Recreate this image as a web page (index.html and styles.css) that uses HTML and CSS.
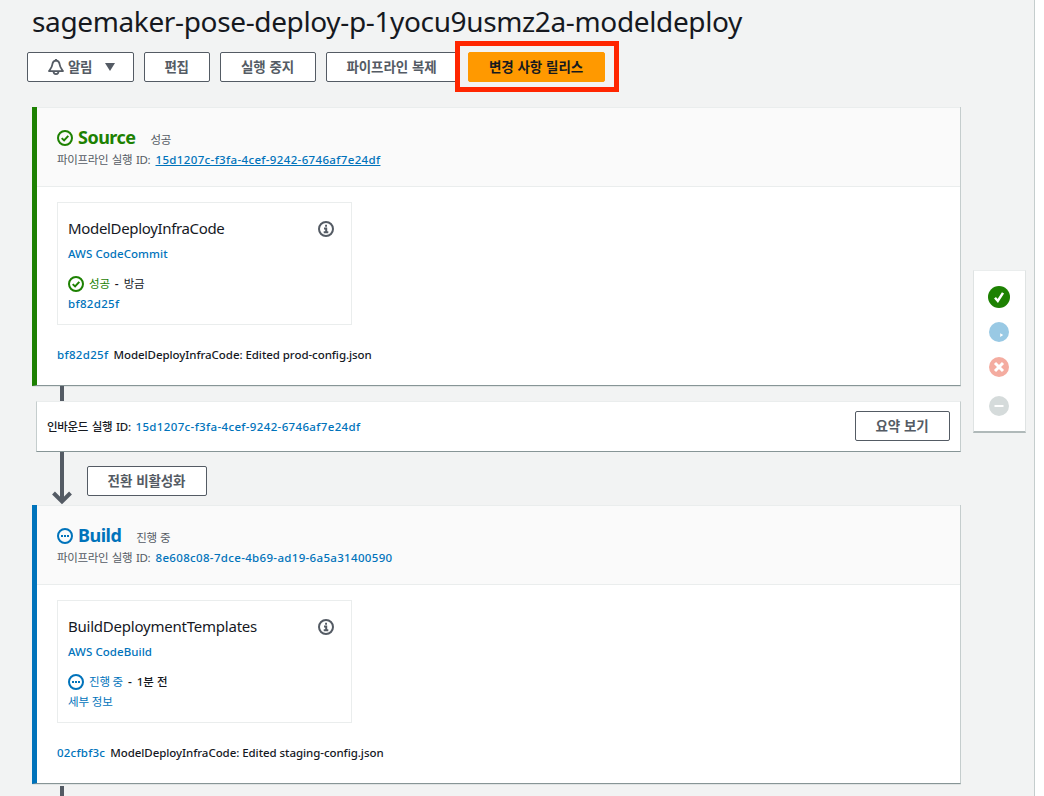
FILE: index.html
```html
<!DOCTYPE html>
<html lang="ko">
<head>
<meta charset="utf-8">
<title>sagemaker-pose-deploy-p-1yocu9usmz2a-modeldeploy</title>
<link rel="stylesheet" href="styles.css">
</head>
<body>
<svg class="defs" width="0" height="0">
  <symbol id="success" viewBox="0 0 16 16"><circle cx="8" cy="8" r="7"/><path d="M4.7 8.1 7.1 10.4 11.3 5.9"/></symbol>
  <symbol id="progress" viewBox="0 0 16 16"><circle cx="8" cy="8" r="7"/><path d="M4 8h2M7 8h2M10 8h2"/></symbol>
  <symbol id="info" viewBox="0 0 16 16"><circle cx="8" cy="8" r="7"/><path d="M7.1 4.7h1.9M6 7.6h2.2v3.6M5.7 11.3h4.6"/></symbol>
</svg>
<div class="page">
  <main class="content">
    <h1 class="title">sagemaker-pose-deploy-p-1yocu9usmz2a-modeldeploy</h1>
    <div class="toolbar">
      <button class="btn notify">
        <svg class="bell" viewBox="0 0 16 16"><path d="M8 1.5C5.3 1.8 4.5 3.5 4.2 6 4 8.300 2.900 9.300 1 12.100h14c-1.900-2.800-3-3.800-3.200-6.100C11.500 3.500 10.700 1.800 8 1.500Z"/><path d="M5.500 12.300c0 3.700 5 3.700 5 0M8 0v1.500"/></svg>
        <span class="short">알림</span>
        <svg class="caret" viewBox="0 0 10 8"><path d="M0 0h10L5 8Z"/></svg>
      </button>
      <button class="btn edit short">편집</button>
      <button class="btn stop">실행 중지</button>
      <button class="btn clone">파이프라인 복제</button>
      <div class="release-wrap">
        <button class="btn primary">변경 사항 릴리스</button>
        <div class="highlight"></div>
      </div>
    </div>

    <div class="pipeline">
      <section class="stage succeeded">
        <header class="stage-head">
          <div class="stage-name"><svg class="icon"><use href="#success"/></svg><h2>Source</h2><span class="state">성공</span></div>
          <div class="execution"><span class="label">파이프라인 실행 ID:</span><a class="id underlined">15d1207c-f3fa-4cef-9242-6746af7e24df</a></div>
        </header>
        <div class="stage-body">
          <article class="card">
            <div class="card-head"><h3 class="name-infra">ModelDeployInfraCode</h3><svg class="icon info"><use href="#info"/></svg></div>
            <a class="provider">AWS CodeCommit</a>
            <div class="status"><svg class="icon"><use href="#success"/></svg><span class="status-text">성공</span><span>-</span><span class="ko">방금</span></div>
            <a class="detail hash">bf82d25f</a>
          </article>
          <div class="commit"><a class="hash">bf82d25f</a><span class="message">ModelDeployInfraCode: Edited prod-config.json</span></div>
        </div>
      </section>

      <div class="stem short-stem"></div>
      <div class="inbound">
        <div class="inbound-id"><span class="label">인바운드 실행 ID:</span><a class="id">15d1207c-f3fa-4cef-9242-6746af7e24df</a></div>
        <button class="btn summary">요약 보기</button>
      </div>
      <div class="transition">
        <svg class="arrow" viewBox="0 0 20 54"><path d="M10 0v49.500M1.500 41 10 49.500l8.500-8.500"/></svg>
        <button class="btn disable">전환 비활성화</button>
      </div>

      <section class="stage running">
        <header class="stage-head">
          <div class="stage-name"><svg class="icon"><use href="#progress"/></svg><h2>Build</h2><span class="state">진행 중</span></div>
          <div class="execution"><span class="label">파이프라인 실행 ID:</span><a class="id build-id">8e608c08-7dce-4b69-ad19-6a5a31400590</a></div>
        </header>
        <div class="stage-body">
          <article class="card">
            <div class="card-head"><h3>BuildDeploymentTemplates</h3><svg class="icon info"><use href="#info"/></svg></div>
            <a class="provider">AWS CodeBuild</a>
            <div class="status"><svg class="icon"><use href="#progress"/></svg><span class="status-text">진행 중</span><span>-</span><span class="ko minutes">1분 전</span></div>
            <a class="detail ko">세부 정보</a>
          </article>
          <div class="commit"><a class="hash hash-build">02cfbf3c</a><span class="message">ModelDeployInfraCode: Edited staging-config.json</span></div>
        </div>
      </section>
      <div class="stem last-stem"></div>
    </div>
  </main>

  <aside class="rail">
    <nav class="legend">
      <svg class="dot done" viewBox="0 0 22 22"><circle cx="11" cy="11" r="11"/><path d="M7 11.800 9.800 15 15 6.800"/></svg>
      <svg class="dot active" viewBox="0 0 20 20"><circle cx="10" cy="10" r="10"/><path class="tick" d="M11.200 11.200 14.200 13l-3 2Z"/></svg>
      <svg class="dot failed" viewBox="0 0 20 20"><circle cx="10" cy="10" r="10"/><path d="m6 6 8 8M14 6l-8 8"/></svg>
      <svg class="dot idle" viewBox="0 0 20 20"><circle cx="10" cy="10" r="10"/><path d="M5.500 10h9"/></svg>
    </nav>
  </aside>
</div>
</body>
</html>
```
FILE: styles.css
```css
* { box-sizing: border-box; }
body {
  margin: 0;
  height: 796px;
  overflow: hidden;
  background: #fff;
  color: #16191f;
  font: 500 12px/20px "Noto Sans", "Noto Sans CJK KR", sans-serif;
}
h1, h2, h3 { margin: 0; }
a { color: #0073bb; }
.defs { display: block; position: absolute; }
.page {
  display: flex;
  width: 1035px;
  height: 796px;
  overflow: hidden;
  background: #f2f3f3;
  border-right: 1px solid #c5cdcd;
}
.content { flex: none; width: 961px; }
.title {
  height: 42px;
  padding-left: 32px;
  font-size: 28px;
  line-height: 43px;
  font-weight: 400;
  letter-spacing: -0.362px;
  white-space: nowrap;
}

.toolbar { display: flex; gap: 10px; margin: 10px 0 25px 27px; }
.btn {
  flex: none;
  display: flex;
  align-items: center;
  justify-content: center;
  height: 30px;
  padding: 0 1px 0 0;
  border: 1px solid #545b64;
  border-radius: 2px;
  background: #fff;
  color: #545b64;
  font: 700 13.5px/20px "Noto Sans", "Noto Sans CJK KR", sans-serif;
  letter-spacing: -0.1px;
  word-spacing: 0.5px;
  white-space: nowrap;
}
.short { letter-spacing: -0.4px; }
.notify { width: 107px; justify-content: flex-start; padding-left: 20px; }
.bell { width: 16px; height: 16px; margin-right: 4px; fill: none; stroke: #545b64; stroke-width: 1.8; stroke-linejoin: round; }
.caret { width: 10px; height: 8px; margin-left: 13px; fill: #545b64; }
.edit { width: 66px; }
.stop { width: 96px; }
.clone { width: 132px; }
.release-wrap { position: relative; }
.primary { width: 137px; background: #ff9900; border-color: #ff9900; color: #16191f; }
.highlight { position: absolute; inset: -11px -14px -10px -13px; border: 5px solid #ff2600; }

.pipeline { padding-left: 32px; }
.stage {
  height: 279px;
  border-left: 5px solid;
  border-bottom: 1px solid #879596;
  border-right: 1px solid #c5cdcd;
  background: #fff;
  box-shadow: 0 1px 0 #e0e4e4;
}
.succeeded { border-left-color: #1d8102; --tone: #1d8102; }
.running { border-left-color: #0073bb; --tone: #0073bb; }
.stage-head {
  height: 80px;
  padding: 19px 20px 0;
  background: #fafafa;
  border-top: 1px solid #eaeded;
  border-bottom: 1px solid #eaeded;
}
.icon { flex: none; width: 16px; height: 16px; fill: none; stroke: var(--tone); stroke-width: 2; }
.stage-name { display: flex; align-items: center; height: 22px; }
.stage-name h2 {
  margin-left: 5px;
  padding-bottom: 2px;
  color: var(--tone);
  font-size: 18px;
  line-height: 22px;
  letter-spacing: -0.5px;
}
.state { margin: 4px 0 0 15px; color: #545b64; font-weight: 400; font-size: 11.5px; letter-spacing: -0.3px; word-spacing: 0.5px; }
.execution { display: flex; height: 22px; line-height: 22px; }
.execution .label { width: 99px; color: #545b64; font-weight: 400; font-size: 11.5px; letter-spacing: -0.35px; word-spacing: 1px; }
.id { margin-left: -0.5px; font-size: 11.5px; letter-spacing: 0.355px; }
.build-id { letter-spacing: 0.33px; }
.underlined { text-decoration: underline; }

.stage-body { padding: 15px 20px 0; }
.card {
  display: flex;
  flex-direction: column;
  width: 295px;
  height: 123px;
  padding: 14px 17px 0 10px;
  border: 1px solid #eaeded;
}
.card-head { display: flex; align-items: center; justify-content: space-between; height: 24px; margin-bottom: 3px; }
.card-head h3 { padding-bottom: 2px; font-size: 15px; line-height: 24px; font-weight: 400; letter-spacing: -0.226px; }
.card-head .name-infra { letter-spacing: -0.337px; }
.card-head .info { stroke: #545b64; }
.provider { font-size: 11.5px; letter-spacing: 0.05px; margin-bottom: 10px; }
.status { display: flex; align-items: center; gap: 5px; height: 20px; }
.status-text { color: var(--tone); font-weight: 400; font-size: 11.5px; letter-spacing: -0.2px; }
.ko { font-weight: 400; font-size: 11.5px; letter-spacing: -0.15px; }
.minutes { font-weight: 500; letter-spacing: 0; }
.commit { display: flex; gap: 5px; margin-top: 20px; }
.message { font-size: 11.5px; letter-spacing: -0.06px; }
.hash { font-size: 11.5px; letter-spacing: 0.33px; }
.hash-build { letter-spacing: 0.23px; }

.stem { width: 4px; margin-left: 28px; background: #545b64; }
.short-stem { height: 15px; }
.last-stem { height: 12px; margin-top: 2px; }
.inbound {
  display: flex;
  align-items: center;
  justify-content: space-between;
  height: 51px;
  margin-left: 4px;
  padding: 0 10px 1px;
  background: #fff;
  border: 1px solid #c5cdcd;
  border-top-color: #eaeded;
  border-bottom-color: #879596;
}
.inbound-id { display: flex; padding-top: 1px; }
.inbound-id .label { width: 89px; font-size: 11.5px; letter-spacing: -0.3px; word-spacing: 1px; }
.summary { width: 95px; }
.transition { display: flex; height: 53px; margin-left: 20px; }
.arrow { width: 20px; height: 54px; fill: none; stroke: #545b64; stroke-width: 4; }
.disable { width: 120px; margin: 14px 0 0 15px; }

.rail { padding: 270px 0 0 12px; }
.legend {
  display: flex;
  flex-direction: column;
  align-items: center;
  width: 53px;
  height: 163px;
  padding: 15px 1px 0 0;
  background: #fff;
  border: 1px solid #dfe3e3;
  border-top-color: #eaeded;
  border-bottom: 2px solid #b0b9b9;
}
.dot { width: 20px; height: 20px; margin-right: 1px; fill: none; stroke: #fff; stroke-width: 2.5; }
.dot circle { stroke: none; }
.done { width: 22px; height: 22px; }
.done circle { fill: #1d8102; }
.active { margin-top: 14px; }
.active circle { fill: #99c9e4; }
.active .tick { fill: #fff; stroke: none; }
.failed { margin-top: 15px; stroke-width: 3; }
.failed circle { fill: #f4aca0; }
.idle { margin-top: 19px; stroke-width: 2; }
.idle circle { fill: #d5dbdb; }
```
